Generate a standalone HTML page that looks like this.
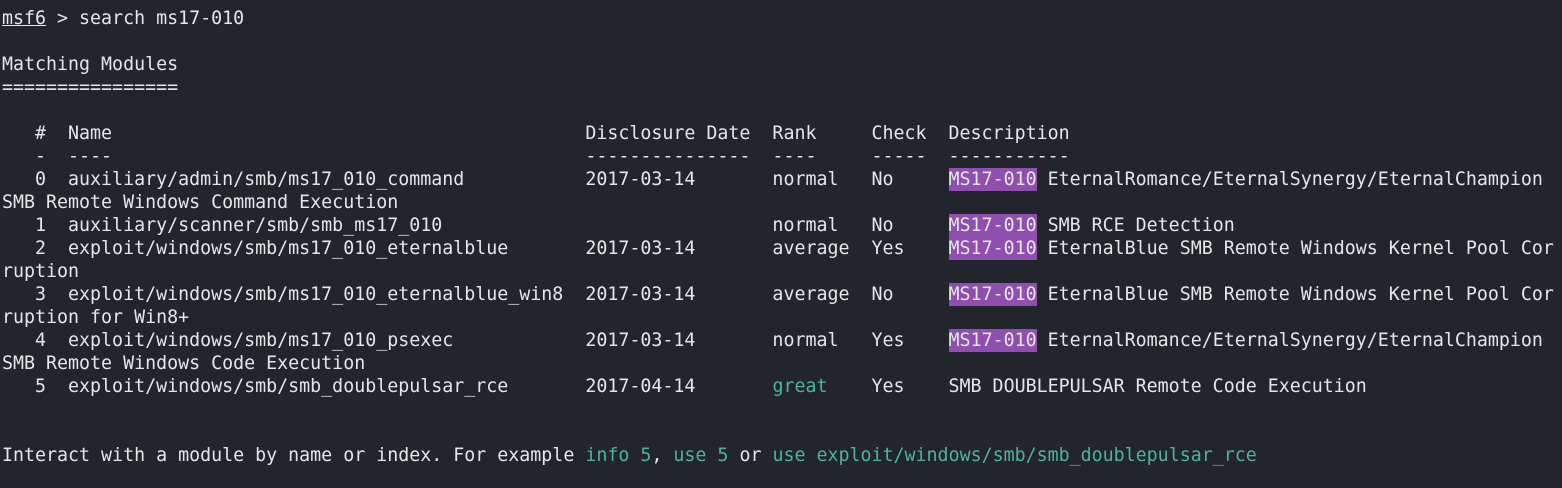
<!DOCTYPE html>
<html><head><meta charset="utf-8"><style>
html,body{margin:0;padding:0;background:#22252c;width:1562px;height:488px;overflow:hidden}
pre{margin:0;position:absolute;left:2px;top:7px;font-family:"DejaVu Sans Mono","Liberation Mono",monospace;font-size:18.3px;line-height:23px;color:#e6e6e6;white-space:pre}
.h{background:#8e4fae;padding:1px 0}
.g{color:#4db596}
u{text-decoration:underline}
</style></head><body>
<pre><u>msf6</u> &gt; search ms17-010

Matching Modules
================

   #  Name                                           Disclosure Date  Rank     Check  Description
   -  ----                                           ---------------  ----     -----  -----------
   0  auxiliary/admin/smb/ms17_010_command           2017-03-14       normal   No     <span class="h">MS17-010</span> EternalRomance/EternalSynergy/EternalChampion
SMB Remote Windows Command Execution
   1  auxiliary/scanner/smb/smb_ms17_010                              normal   No     <span class="h">MS17-010</span> SMB RCE Detection
   2  exploit/windows/smb/ms17_010_eternalblue       2017-03-14       average  Yes    <span class="h">MS17-010</span> EternalBlue SMB Remote Windows Kernel Pool Cor
ruption
   3  exploit/windows/smb/ms17_010_eternalblue_win8  2017-03-14       average  No     <span class="h">MS17-010</span> EternalBlue SMB Remote Windows Kernel Pool Cor
ruption for Win8+
   4  exploit/windows/smb/ms17_010_psexec            2017-03-14       normal   Yes    <span class="h">MS17-010</span> EternalRomance/EternalSynergy/EternalChampion
SMB Remote Windows Code Execution
   5  exploit/windows/smb/smb_doublepulsar_rce       2017-04-14       <span class="g">great</span>    Yes    SMB DOUBLEPULSAR Remote Code Execution


Interact with a module by name or index. For example <span class="g">info 5</span>, <span class="g">use 5</span> or <span class="g">use exploit/windows/smb/smb_doublepulsar_rce</span>
</pre>
</body></html>
